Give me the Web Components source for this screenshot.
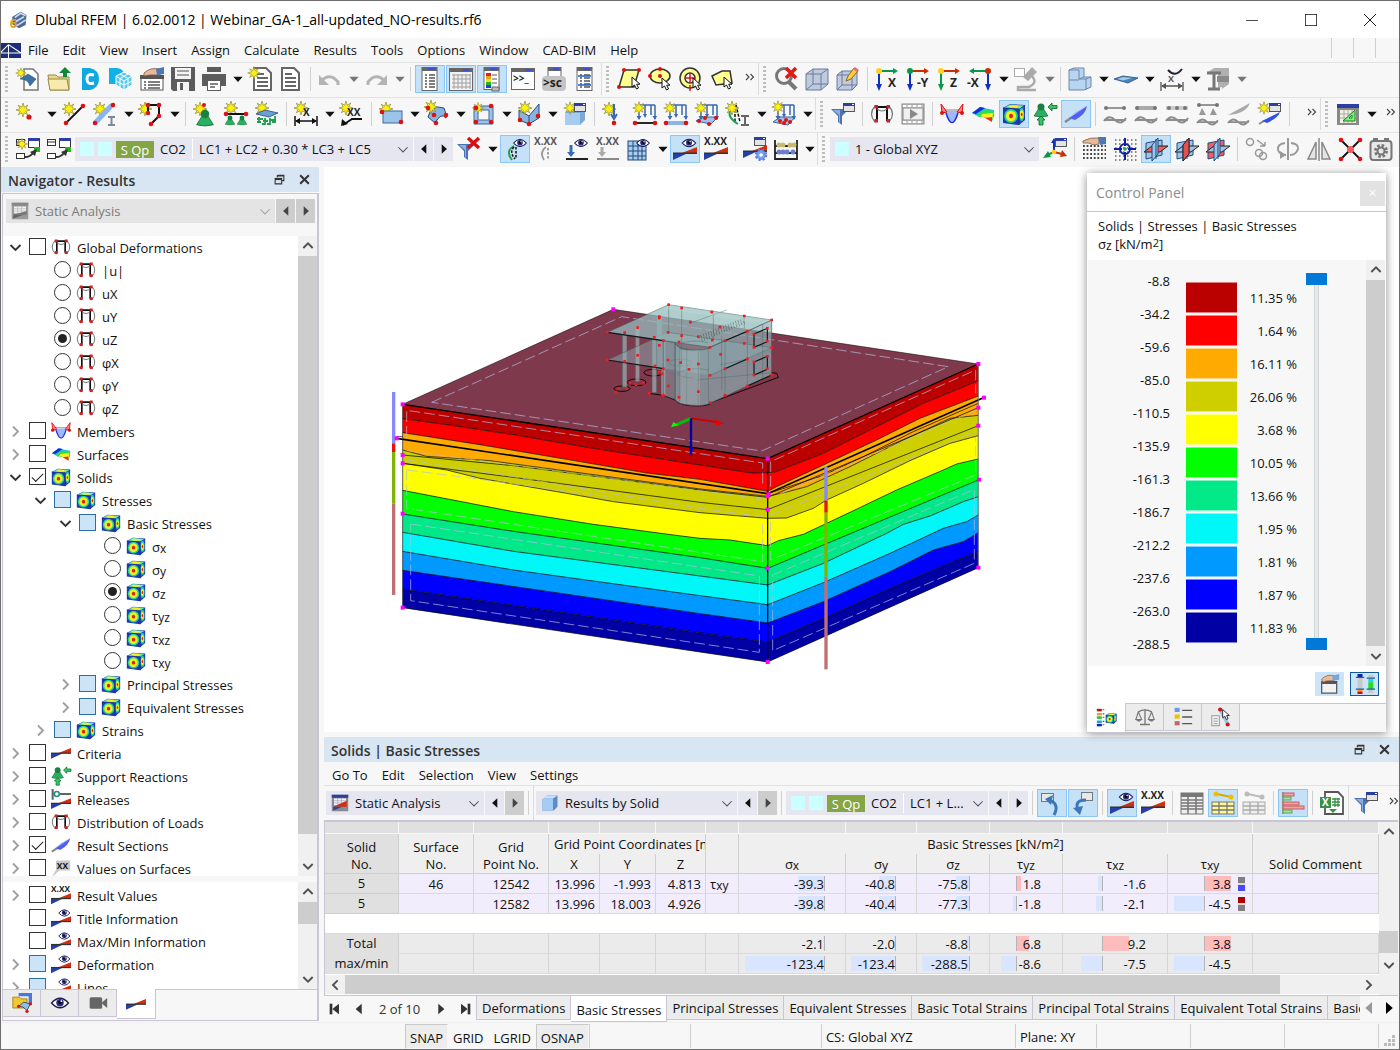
<!DOCTYPE html>
<html lang="en">
<head>
<meta charset="utf-8">
<title>Dlubal RFEM</title>
<style>
html,body{height:100%;margin:0}
body{font:13px/18px "Open Sans","Noto Sans",sans-serif;color:#111;overflow:hidden}
</style>
</head>
<body>
<app-window></app-window>
<script>
/* ---------- helpers ---------- */
const define = (name, css, render, after) => customElements.define(name, class extends HTMLElement {
  connectedCallback() {
    if (this.shadowRoot) return;
    const root = this.attachShadow({ mode: 'open' });
    root.innerHTML = `<style>*{box-sizing:border-box}button,select,input{font:inherit;color:inherit;margin:0}button{border:0;background:none;padding:0}${css}</style>` + render(this);
    if (after) after(this, root);
  }
});

/* ---------- icon drawing ---------- */
const P = (d, f = 'none', s = '', w = 1) => `<path d="${d}" fill="${f}"${s ? ` stroke="${s}" stroke-width="${w}"` : ''}/>`;
const R = (x, y, w, h, f, s = '') => `<rect x="${x}" y="${y}" width="${w}" height="${h}" fill="${f}"${s ? ` stroke="${s}"` : ''}/>`;
const C = (x, y, r = 2, f = '#e01010') => `<circle cx="${x}" cy="${y}" r="${r}" fill="${f}"/>`;
const G = (x, y, s, inner) => `<g transform="translate(${x} ${y}) scale(${s})">${inner}</g>`;
const T = (x, y, t, s = 9, c = '#222') => `<text x="${x}" y="${y}" font-size="${s}" font-weight="700" fill="${c}" font-family="Open Sans,sans-serif">${t}</text>`;
const star = (x = 6, y = 6, s = 1) => G(x, y, s, P('M0-7L1.3-2.8 4.8-5 2.8-1.5 7 0 2.8 1.3 4.8 4.8 1.3 2.8 0 7-1.3 2.8-4.8 4.8-2.8 1.3-7 0-2.8-1.3-4.8-4.8-1.3-2.8Z', '#ffee10', '#8a8a3a', .7));
const eye = (x = 16, y = 5, s = 1) => G(x, y, s, P('M-7.500 0Q0-8.500 7.500 0Q0 8.500-7.500 0Z', '#fff', '#1b1b55', 1.2) + C(0, -.3, 3.3, '#2b2b7a') + C(0, -.6, 1.4, '#000') + C(1.200, -1.600, .8, '#fff'));
const win = (x, y, w = 12, h = 9) => R(x + .5, y + .5, w - 1, h - 1, '#e4e4e4', '#555') + R(x, y, w, 3, '#2d3f9e') + R(x + w - 3, y + 1, 2, 1, '#fff');
const wedge = (y = 15) => P(`M0 ${y}H15L0 ${y + 7}Z`, '#2440a8') + P(`M9 ${y}L24 ${y - 6}V${y}Z`, '#d03010') + R(0, y - .5, 24, 1.500, '#333');
const frame = () => P('M6 5H18M7 5V19M17 5V19', 'none', '#111', 2) + P('M5 4Q-2 12 5 20M19 4Q26 12 19 20M7 7Q12 11 17 7', 'none', '#777', 1.200) + [[5, 4], [17, 4], [5, 18], [17, 18]].map(([x, y]) => R(x - .5, y - 1, 3.500, 3.500, '#d02020')).join('');
const cubeSolid = P('M1 6L8 2L23 3V18L17 23L1 21Z', '#2038b8') + P('M2 6L8 2.500L22 3.500L17 7Z', '#70e8b8') + P('M17 7L22 4V17.500L17 22Z', '#2850c8') + '<ellipse cx="9" cy="14" rx="6.800" ry="7" fill="#20d890"/><ellipse cx="9" cy="14" rx="5" ry="5.200" fill="#f4f020"/><ellipse cx="9" cy="14" rx="2" ry="2.200" fill="#e02010"/><ellipse cx="19.700" cy="12.500" rx="2.500" ry="6.500" fill="#20d890"/><ellipse cx="19.700" cy="12.500" rx="1.800" ry="4.200" fill="#f4f020"/><ellipse cx="19.700" cy="12.500" rx=".9" ry="1.800" fill="#e02010"/><ellipse cx="12" cy="4.600" rx="5" ry="1.200" fill="#f4f020"/>' + P('M1 6L17 7V23', 'none', '#1a2a90', 1);
const cursor = (x, y) => G(x, y, 1, P('M0 0L0 10L2.500 8L4.500 12L6.500 11L4.700 7.200H8Z', '#fff', '#111', 1));
const doc = (x = 5, c = '#666') => P(`M${x} 1H${x + 12}L${x + 17} 6V23H${x}Z`, '#fff', c, 2) + P(`M${x + 3} 7H${x + 10}M${x + 3} 11H${x + 14}M${x + 3} 15H${x + 14}M${x + 3} 19H${x + 14}`, 'none', c, 1.800);
const listwin = b => R(4, .5, 15, 23, '#fff', '#666') + R(4, 0, 15, 4, '#666') + R(10, 1, 7, 2, '#3a50e0') + P('M7 8H9M7 11H9M7 14H9M7 17H9M7 20H9M11 8H17M11 11H17M11 14H17M11 17H17M11 20H17', 'none', b || '#555', 1.300);
const funnel = P('M0 7H18L11 14V23L7 20V14Z', '#4a72b4') + P('M2 8H9L9 21L8 20V13Z', '#8fb0de');
const axes = (t, c1, c2, o, mir) => { const x = mir ? 20 : 4, e = mir ? 1 : 23, d = mir ? 1 : -1; return P(`M${x} 4H${e + d * 3}`, 'none', c1, 2) + P(`M${e} 4L${e + d * 5} 1V7Z`, c1) + P(`M${x} 4V18`, 'none', c2, 2) + P(`M${x} 24L${x - 3} 17H${x + 3}Z`, c2) + C(x, 4, 3, o) + T(mir ? -1 : t === '-Y' ? 11 : 13, 20, t, 12); };
const boxes = R(.5, 2.500, 8, 6, '#fff', '#333') + P('M0 5H9', 'none', '#333', 1) + R(12.500, 1.500, 11, 9, '#fff', '#333') + R(12, 1, 12, 3, '#2d3f9e') + R(18, 10, 6, 5, '#20b820') + R(.5, 16.500, 8, 5, '#fff', '#333') + P('M9 20Q14 20 17 16', 'none', '#333', 2) + P('M14 15L21 12L19 19Z', '#333');
const loadArrows = P('M6 3V17M12 3V13M18 3V13M22 3V17M6 3H22', 'none', '#3a6ab0', 1.500) + P('M3.500 14H8.500L6 18ZM10 12H14L12 16ZM19.500 14H24L22 18Z', '#3a6ab0');
const sine = P('M1 19Q6 12 12 18T23 16M1 18H23', 'none', '#8c8c8c', 2);
const green = '#1fa050';
const man = (x, y, s = 1) => G(x, y, s, P('M-7 9L-2 1H2L7 9Q0 11-7 9Z', '#28b060', '#0a6030', .6) + C(0, 0, 3.500, '#188040'));
const plane = (a, b) => P('M2 6L18 3V18L2 22Z', a, '#234a80', 1) + P('M0 15L8 9H24L16 15Z', b, '#222', 1) + P('M8 24V8L14 1V17Z', '#9cc4e8', '#234a80', 1) + P('M12 2V22', 'none', '#234a80', 1);
const ICONS = {
  app: P('M4 8L14 2L21 6L20 18L12 22L4 17Z', '#4a6a98') + P('M7 9L14 4L20 7M8 14L18 8M9 19L20 12', 'none', '#c8d8ee', 2) + T(1, 22, '6', 15, '#e0a020'),
  bridge: R(0, 0, 24, 18, '#1c2e78') + P('M0 12H24M9 2V18M9 2L0 11M9 2L24 12', 'none', '#fff', 1.300),
  new: P('M8 2H17L22 7V23H8Z', '#fff', '#777', 1.500) + P('M4 12L12 7L20 12L14 19Q12 12 4 12Z', '#3a70a8', '#245', .5) + star(5, 6, .75),
  open: P('M1 8H9L11 10H22V23H3Z', '#e8d888', '#9a8a48', 1) + P('M1 12H20L22 23H3Z', '#f6eab0', '#9a8a48', 1) + P('M18 0L24 6H20V10H16V6H12Z', '#108838'),
  dcloud: P('M4 1H12Q21 3 21 12T12 23H4Z', '#10a8e0') + P('M16 8Q9 6 9 12T16 16', 'none', '#fff', 3),
  blocks: P('M0 1H8Q15 2 15 8V17H0Z', '#10b0e8') + P('M15 5L23 9V18L15 23L7 18V9Z', '#58c8f0', '#fff', 1) + P('M7 9L15 14L23 9M15 14V23M11 7L19 11.500V20M19 7L11 11.500V20M7 14L15 18L23 14', 'none', '#fff', 1),
  handlist: R(1, 9, 22, 14, '#fff', '#555') + R(0, 8, 24, 4, '#555') + P('M4 15H6M8 15H20M4 18H6M8 18H20M4 21H6M8 21H20', 'none', '#555', 1.300) + P('M4 6Q10 0 20 2V8H10L4 9Z', '#e8b898', '#7a5a48', .8) + P('M16 2L24 0V7L17 8Z', '#4a78b8'),
  handbox: P('M2 9H20V23H2Z', '#f2f2f2', '#555', 1.500) + R(2, 9, 18, 3, '#555') + P('M2 6Q8 0 17 2V8H9L3 10Z', '#e8b898', '#7a5a48', .8) + P('M15 2L23 0V7L15 8Z', '#7aa4d8'),
  save: P('M0 0H24V24H2L0 22Z', '#5c5c5c') + R(4, 1, 16, 11, '#f4f4f4') + P('M6 4H18M6 8H18', 'none', '#888', 1.500) + R(6, 15, 12, 9, '#f4f4f4') + R(9, 16, 3, 7, '#5c5c5c'),
  print: R(5, 0, 14, 5, '#5c5c5c') + R(0, 7, 24, 12, '#5c5c5c') + R(5.500, 13.500, 13, 10, '#fff', '#5c5c5c') + P('M8 17H16M8 20H13', 'none', '#5c5c5c', 1.500),
  newdoc: doc(6) + star(6, 6, .9), doc: doc(3),
  undo: P('M3 14Q12 5 20 15V18', 'none', '#b4b4b4', 3) + P('M1 8V18H11Z', '#b4b4b4'),
  redo: P('M21 14Q12 5 4 15V18', 'none', '#b4b4b4', 3) + P('M23 8V18H13Z', '#b4b4b4'),
  panel1: listwin(), panel3: listwin('#555') + P('M5 9H18M5 18H18', 'none', '#2060d0', 1.500),
  table1: R(.5, 1.500, 23, 22, '#f2f2f2', '#666') + R(0, 1, 24, 4, '#666') + R(14, 2, 7, 2, '#3a50e0') + P('M3 8H22M3 12H22M3 16H22M3 20H22M5 7V22M9 7V22M13 7V22M17 7V22M21 7V22', 'none', '#a0a0a0', 1),
  panel2: R(4, .5, 15, 22, '#fff', '#666') + R(4, 0, 15, 4, '#666') + R(10, 1, 7, 2, '#3a50e0') + R(6, 6, 5, 3, '#e02020') + R(6, 9, 5, 3, '#f0a020') + R(6, 12, 5, 3, '#e8e820') + R(6, 15, 5, 3, '#20b820') + R(6, 18, 5, 3, '#2040e0') + P('M12 8H17M12 12H17M12 16H17', 'none', '#555', 1) + R(12, 20, 7, 4, '#bbb', '#666'),
  console: R(.5, 1.500, 23, 21, '#fff', '#666') + R(0, 1, 24, 4, '#666') + R(14, 2, 7, 2, '#3a50e0') + T(2, 15, '&gt;&gt;_', 10),
  sc: R(6, .5, 13, 12, '#fff', '#666') + R(6, 0, 13, 4, '#666') + R(11, 1, 6, 2, '#3a50e0') + '<rect x="0" y="9" width="24" height="15" rx="4" fill="#c4c4c4"/>' + T(1, 20, '&gt;sc', 12),
  selquad: P('M7 3L22 3L17 20L2 20Z', '#ffff90', '#333', 1.500) + C(7, 3) + C(22, 3) + C(2, 20) + cursor(15, 10),
  selell: '<ellipse cx="12" cy="9" rx="10" ry="7" fill="#ffff90" stroke="#333" stroke-width="1.500"/>' + C(12, 2) + C(2, 9) + C(12, 9) + cursor(14, 11),
  selcirc: '<circle cx="11" cy="11" r="10" fill="#ffff90" stroke="#333" stroke-width="1.500"/><circle cx="11" cy="11" r="5" fill="#fff" stroke="#333" stroke-width="1.500"/>' + P('M11 6V16M6 11H16M11 18V24', 'none', '#e01010', 1.500) + cursor(14, 11),
  selpoly: P('M2 9L12 4L20 4L22 16L6 18Z', '#ffff90', '#333', 1.500) + cursor(14, 10),
  findx: '<circle cx="10" cy="9" r="7.500" fill="none" stroke="#777" stroke-width="3"/>' + P('M15 15L22 22', 'none', '#777', 4) + P('M12 1L22 11M22 1L12 11', 'none', '#e01818', 3.500),
  cube: P('M1 7L8 2H23V17L16 23H1Z', '#c0cade', '#6a7a9a', 1) + P('M1 7H16V23M16 7L23 2M8 2V17H23M8 17L1 23', 'none', '#6a7a9a', 1),
  cubepen: P('M1 8L6 4H21V18L16 23H1Z', '#c0cade', '#6a7a9a', 1) + P('M1 8H16V23M16 8L21 4M6 4V18H21M6 18L1 23', 'none', '#6a7a9a', 1) + P('M10 14L12 9L18 1L22 4L15 12Z', '#ffd040', '#a06010', 1) + P('M17 2L21 5L23 3L19 0Z', '#e07070'),
  ax1: axes('X', '#0a9848', '#1030c0', '#ffd020'), ax2: axes('-Y', '#c83000', '#1030c0', '#0a9848'), ax3: axes('Z', '#c83000', '#0a9848', '#ffd020'), ax4: axes('-X', '#0a9848', '#1030c0', '#c83000', 1),
  micro: R(.5, 1.500, 10, 8, '#fff', '#aaa') + P('M18 0L23 5L14 14L9 10Z', '#aaa') + P('M18 9Q24 16 15 20H4V23H22', 'none', '#aaa', 2.500),
  stair: P('M1 3L6 1H16V10H23V20L16 23H1Z', '#b8d4f0', '#6a88a8', 1) + P('M1 3H11V12L16 10M11 12H18V23M18 12L23 10M1 13H11', 'none', '#6a88a8', 1),
  slab: P('M0 12L9 9L24 11L14 16Z', '#4a86bc', '#234a78', .8) + P('M3 12L9 10L18 11L9 13.500Z', '#a4c8e8'),
  dimx: P('M1 15V24M23 15V24M2 19H22', 'none', '#555', 1.300) + P('M1 19L6 16V22ZM23 19L18 16V22Z', '#555') + P('M8 3Q15 11 22 2', 'none', '#223', 2) + T(8, 15, 'X', 9, '#555'),
  beam3d: P('M2 5L8 1H23V17L16 22V20L12 21V6H2Z', '#b0b0b0') + P('M1 6H15M8 6V22M2 22H14', 'none', '#777', 3) + P('M11 9H23V15H11Z', '#8a8a8a'),
  snode: star(7, 8) + C(13, 15, 2.600),
  sline: star(7, 7) + P('M4 21L20 5', 'none', '#111', 1.800) + C(4, 21, 2.300) + C(21, 4, 2.300),
  smember: star(7, 7) + P('M2 21L19 3', 'none', '#8cb4e8', 5) + C(2, 21, 2.300) + C(20, 3, 2.300) + P('M15 15H22M18.500 15V23M15 23H22', 'none', '#7a88a0', 2),
  spoly: star(6, 7) + P('M9 11V3H20V14L12 22', 'none', '#111', 2) + C(9, 11, 2.300) + C(9, 3, 2.300) + C(20, 3, 2.300) + C(20, 14, 2.300) + C(12, 22, 2.300),
  ssup: star(7, 7) + C(11, 3, 2) + man(12, 12, 1.200),
  slinesup: star(7, 6) + P('M2 12H22', 'none', '#111', 2) + C(2, 12, 2.300) + C(22, 12, 2.300) + man(6, 16, .7) + man(18, 16, .7),
  ssurfsup: star(7, 6) + P('M1 12L10 8L23 11L14 15Z', '#6aa0d0', '#234a78', .8) + P('M4 15V20H2M4 20H6M10 16V22H7M15 16V22H12M20 14V20H17M2 17H8M8 19H13M14 18H21', 'none', green, 1.800),
  sdim: star(7, 6) + P('M1 14V24M23 14V24M2 19H22', 'none', '#111', 1.500) + P('M1 19L6 16V22ZM23 19L18 16V22Z', '#111') + T(9, 14, 'X', 10),
  sxx: star(6, 6) + T(7, 14, 'XX', 10) + P('M22 17H12L3 23', 'none', '#111', 1.800) + P('M1 24L2 17L8 22Z', '#111'),
  ssurf: star(7, 7) + R(4, 9, 19, 12, '#9cc4ea', '#3a6aa0') + C(3, 10, 2.300) + C(22, 20, 2.300),
  ssurf2: P('M3 15Q6 2 19 6Q22 14 21 16Q16 10 10 21Z', '#88b4e0', '#2a4a80', 1) + star(6, 5) + C(3, 6, 2.300) + C(11, 21, 2.300) + C(21, 13, 2.300) + C(9, 13, 2.300),
  sopen: '<path d="M3 4H22V22H3ZM7 8V18H18V8Z" fill="#9cc4ea" stroke="#3a6aa0" fill-rule="evenodd"/>' + star(7, 6, .8) + C(5, 6, 2.300) + C(20, 4, 2.300) + C(5, 20, 2.300) + C(20, 20, 2.300),
  ssolid: P('M2 8L12 14V22L2 18ZM12 14L22 2V16L12 22', '#88b4e0', '#2a4a80', 1) + star(8, 6) + C(3, 18, 2.300) + C(12, 22, 2.300) + C(21, 14, 2.300),
  sblock: P('M2 11L7 7H22V18L17 23H2Z', '#7aa8d8') + R(2, 11, 15, 12, '#a8ccf0') + star(7, 6, .9) + win(11, 1),
  sload1: star(7, 7) + P('M12 2V17M9 12L12 17L15 12', 'none', '#3a6ab0', 2) + C(12, 21, 2.300),
  sload2: loadArrows + star(6, 6, .9) + P('M2 21H22', 'none', '#111', 1.800) + C(2, 21, 2.300) + C(22, 21, 2.300),
  sload3: loadArrows + star(6, 6, .9) + P('M2 21H22', 'none', '#8cb4e8', 4) + C(2, 21, 2.300) + C(22, 21, 2.300),
  sload4: P('M1 19L8 15H23L16 22Z', '#9cc4ea', '#3a6aa0') + loadArrows + star(6, 6, .9) + C(4, 19) + C(10, 16) + C(14, 22) + C(21, 16),
  simp: '<path d="M9 3V20M10 3L14 20" fill="none" stroke="#111" stroke-width="1.500" stroke-dasharray="3 1.500"/>' + P('M5 6Q0 15 12 22', 'none', green, 2) + star(6, 6) + P('M15 14H23M19 14V23M15 23H23', 'none', '#666', 2),
  sload5: P('M1 20L8 15H23L16 23Z', '#9cc4ea', '#3a6aa0') + loadArrows + star(6, 5, .9) + C(8, 19) + C(12, 21) + C(14, 18) + C(18, 20),
  filter: funnel + win(12, 1), filterx: funnel + P('M11 1L22 11M22 1L11 11', 'none', '#d81010', 3.500),
  frame: frame(), film: R(1, 2, 22, 20, '#c8c8c8', '#888') + R(2, 6, 20, 12, '#f0f0f0', '#888') + '<path d="M2 4H22M2 20H22" stroke="#fff" stroke-width="2" stroke-dasharray="3 2"/>' + P('M9 7L17 12L9 17Z', '#888'),
  mem: P('M2 8H22', 'none', '#888', 1) + P('M2 2L5 9H19L22 2L20 11H18Q12 28 6 11H3Z', '#a0b8f8') + P('M6 11Q12 30 18 11', 'none', '#2030e0', 1.600) + P('M1 2L2 11L7 10ZM23 2L22 11L17 10Z', '#ff8080', '#e01010', 1) + C(2, 11, 2) + C(22, 11, 2),
  surf: P('M1 11L10 5Q16 7 23 8V14L21 19Q12 14 8 15Z', '#20c0e8') + P('M6 12L14 8L23 9L21 19Q13 14 8 15Z', '#30e040') + P('M11 12L22 11L21 19Q16 15 10 14.500Z', '#f8f020') + P('M14 16L21 15V20Z', '#f03010') + P('M1 11L9 5L14 6L5 12Z', '#1030d0'),
  solid: cubeSolid,
  support: man(8, 5, 1) + P('M15 5L19 1V3.500H24V6.500H19V9ZM8 14L12 18H10V23H6V18H4Z', '#30c860', '#0a6030', .8),
  section: P('M1 20L7 16', 'none', '#888', 2.500) + P('M5 16L23 4Q22 12 11 18Z', '#5060f0') + P('M5 16L23 4L12 10Z', '#a0a8ff'),
  r1: sine + P('M2 6H22', 'none', '#777', 1.500) + C(3, 6, 2, '#777') + C(21, 6, 2, '#777'),
  r2: sine + P('M2 6H22', 'none', '#aaa', 4) + C(3, 6, 2, '#777') + C(21, 6, 2, '#777'),
  r3: sine + R(1, 4, 22, 4, '#ccc') + C(4, 6, 2, '#777') + C(12, 6, 2, '#777') + C(20, 6, 2, '#777'),
  r4: G(0, 3, .95, sine) + P('M2 3H22', 'none', '#777', 1.500) + C(3, 3, 2, '#777') + C(21, 3, 2, '#777') + P('M3 13L6 6L10 13ZM14 13L17 6L21 13Z', '#999'),
  r5: G(0, 3, .95, sine) + P('M1 13L23 1Q20 9 9 12Z', '#aaa'),
  snewsec: win(11, 1) + star(6, 6, .9) + P('M1 22L6 19', 'none', '#888', 2) + P('M4 19L22 10Q20 16 9 21Z', '#3050e8'),
  gridtri: R(1, 2, 22, 21, '#888') + R(1, 2, 22, 4, '#2d3f9e') + R(4, 8, 16, 13, '#f0f0e0') + P('M4 12H20M4 16H20M8 8V21M12 8V21M16 8V21', 'none', '#aaa', 1) + P('M7 19L19 8V19Z', '#80f080', '#208020', 1) + P('M13 16L16 13V16Z', '#fff', '#208020', 1),
  tbl1: boxes + star(6, 7, .8), tbl2: boxes,
  eyeimp: P('M11 9Q2 14 9 23', 'none', green, 2) + '<path d="M11 10Q6 15 12 22M13 10V22" fill="none" stroke="#111" stroke-width="1.500" stroke-dasharray="2.500 1.500"/>' + eye(17, 6, .85),
  ximp: T(0, 8, 'X.XX', 10, '#555') + P('M12 10Q5 15 10 23', 'none', '#999', 1.800) + '<path d="M14 11V23" stroke="#888" stroke-width="1.500" stroke-dasharray="2.500 1.500"/>',
  eyeload: P('M6 8V18', 'none', '#3a6ab0', 3) + P('M2 15H10L6 20Z', '#3a6ab0') + R(1, 21, 22, 2, '#222') + eye(16, 6, .85),
  xload: T(0, 8, 'X.XX', 10, '#555') + P('M6 10V17', 'none', '#aaa', 3) + P('M2 15H10L6 20Z', '#aaa') + R(1, 21, 22, 2, '#888'),
  eyegrid: R(1, 4, 18, 19, '#a8ccf0', '#234a78') + P('M1 9H19M1 14H19M1 19H19M6 4V23M11 4V23M15 4V23', 'none', '#234a78', 1) + eye(16, 6, .85),
  eyeres: wedge(16) + eye(16, 6, .9), xres: wedge(16) + T(0, 8, 'X.XX', 10),
  resgear: wedge(14) + win(11, 0) + C(18, 18, 5, '#7aa0f0') + '<circle cx="18" cy="18" r="5" fill="none" stroke="#5a80d8" stroke-width="2.500" stroke-dasharray="2 2"/>' + C(18, 18, 1.800, '#fff'),
  abacus: P('M1 3V23M23 3V23M1 9H23M1 16H23M1 22H23', 'none', '#222', 1.800) + [5, 9, 16, 20].map(x => C(x, 8, 2.500, '#c8b870')).join('') + [5, 9, 13, 19].map(x => C(x, 15, 2.500, '#6a80c8')).join(''),
  csys: P('M11 15V4', 'none', '#1030c0', 2) + P('M11 15L4 18', 'none', '#0a9848', 2) + P('M11 15L19 17', 'none', '#c83000', 2) + P('M0 21L5 14L8 20Z', '#0a9848') + P('M24 19L17 20L19 13Z', '#c83000') + P('M8 6L11 1L14 6Z', '#1030c0') + C(11, 15, 2.300, '#ffd020') + win(12, 1),
  handgrid: '<path d="M1 9H24M1 13H24M1 17H24M1 21H24" fill="none" stroke="#444" stroke-width="1.800" stroke-dasharray="1.800 1.800"/>' + P('M1 4Q8 0 17 1V7L12 8Q6 5 1 6Z', '#e8b898', '#7a5a48', .8) + P('M16 0L24 0V7L18 8Z', '#4a78b8'),
  snapgrid: '<path d="M2 3H24M2 7H24M2 11H24M2 15H24M2 19H24M2 23H24" fill="none" stroke="#666" stroke-width="1.500" stroke-dasharray="1.500 2.500"/><circle cx="12" cy="12" r="5" fill="none" stroke="#1020a0" stroke-width="2"/>' + P('M12 1V9M12 15V23M1 12H9M15 12H23', 'none', '#1020a0', 2) + C(12, 12, 1.800, '#20a060'),
  pl1: plane('#9cc4e8', '#f06060'), pl2: plane('#9cc4e8', '#9cc4e8') + P('M8 24V8L14 1V17Z', '#e85050', '#222', 1), pl3: plane('#f06060', '#9cc4e8'),
  g1: '<circle cx="5" cy="5" r="3.500" fill="none" stroke="#999" stroke-width="1.500"/><circle cx="14" cy="16" r="3.500" fill="none" stroke="#999" stroke-width="1.500"/><circle cx="18" cy="19" r="3.500" fill="none" stroke="#999" stroke-width="1.500"/>' + P('M12 3L20 9M20 9V5M20 9H15', 'none', '#999', 1.500),
  g2: P('M9 6Q1 7 2 13Q4 18 10 18M15 6Q23 7 22 12Q20 18 14 18M12 1V23', 'none', '#999', 2) + P('M4 22V14L10 18Z', '#999'),
  g3: P('M1 22L9 5V22ZM23 22L15 5V22Z', '#e4e4e4', '#888', 1.500) + P('M12 1V24', 'none', '#888', 1.500),
  g4: P('M3 3L22 22M22 3L3 22', 'none', '#111', 1.800) + C(3, 3, 2.300) + C(22, 3, 2.300) + C(3, 22, 2.300) + C(22, 22, 2.300) + C(12.500, 12.500, 3.500, '#f06060'),
  g5: '<rect x="1.500" y="4" width="21" height="19" rx="3" fill="#e8e8e8" stroke="#777" stroke-width="2"/>' + R(4, 1, 5, 4, '#777') + R(15, 1, 5, 4, '#777') + '<circle cx="12" cy="14" r="5.500" fill="none" stroke="#777" stroke-width="3" stroke-dasharray="2.500 1.800"/><circle cx="12" cy="14" r="3.500" fill="none" stroke="#777" stroke-width="2"/>',
  result: wedge(12), release: P('M2 0V13M2 6H24', 'none', '#5a6a6a', 2.500) + '<circle cx="7" cy="6" r="3" fill="#fff" stroke="#2a9080" stroke-width="2"/>' + wedge(17),
  xxflag: P('M6 3H23V15H10L1 23L6 14Z', '#c8c8c8') + T(7, 13, 'XX', 10, '#111'),
  static: R(1, 1, 22, 22, '#8a8a94') + R(1, 1, 22, 4, '#2d3f9e') + R(4, 6, 16, 9, '#f4f4f8') + P('M4 9H20M4 12H20M9 6V15M14 6V15', 'none', '#a8a8b8', 1) + P('M3 17L21 9V17Z', '#d03010') + P('M3 17H15L3 22Z', '#3040a8'),
  staticg: R(1, 1, 22, 22, '#9a9a9a') + R(1, 1, 22, 4, '#888') + R(4, 6, 16, 9, '#f0f0f0') + P('M4 9H20M4 12H20M9 6V15M14 6V15', 'none', '#bbb', 1) + P('M3 17L21 12V17Z', '#777') + P('M3 17H17L3 22Z', '#666'),
  bluecube: P('M2 7L8 2H22V17L17 22H2Z', '#5a8cc8') + R(2, 6, 14, 16, '#a4ccf4') + P('M2 6L8 2H22L16 6Z', '#c8e2fa'),
  tabproj: P('M1 5H9L11 7H18V18H1Z', '#f0c830', '#a07810', 1) + P('M8 0H24V14H20V4H8Z', '#4878d8') + P('M8 16L14 11L22 13L18 21Q13 15 8 16Z', '#90c0e8', '#246', 1) + C(8, 16) + C(22, 13) + C(18, 22),
  tabeye: eye(12, 12, 1.350), tabcam: '<rect x="2" y="5" width="15" height="14" rx="2" fill="#666"/>' + P('M17 11L23 6V18L17 13Z', '#666'),
  arr1: R(1.500, 2.500, 12, 8, '#e8e8e8', '#777') + P('M14 24Q20 13 9 9', 'none', '#3a78b8', 3) + P('M5 8L13 4L11 14Z', '#3a78b8'),
  arr2: R(10.500, 1.500, 11, 8, '#e8e8e8', '#777') + P('M15 9Q3 9 7 19', 'none', '#3a78b8', 3) + P('M2 17L12 15L9 24Z', '#3a78b8'),
  tgrid: R(1, 2, 22, 21, '#eee', '#777') + R(1, 2, 22, 4, '#777') + P('M1 9H23M1 12H23M1 15H23M1 18H23M8 4V23M16 4V23', 'none', '#777', 1.500),
  tyel: R(1, 11, 22, 12, '#fff890', '#777') + P('M1 15H23M1 19H23M8 11V23M16 11V23', 'none', '#777', 1.300) + P('M6 3L20 6', 'none', '#d8a800', 2) + C(5, 3, 2.500, '#f0c000') + C(20, 6, 2.500, '#f0c000'),
  tgry: R(1, 11, 22, 12, '#eee', '#aaa') + P('M1 15H23M1 19H23M8 11V23M16 11V23', 'none', '#aaa', 1.300) + P('M6 3L20 6', 'none', '#bbb', 2) + C(5, 3, 2.500, '#bbb') + C(20, 6, 2.500, '#bbb'),
  bars: P('M2 1V23', 'none', '#888', 1.500) + R(2, 2, 11, 3, '#f4a0a0', '#c06060') + R(2, 6, 8, 3, '#a0e0a0', '#60a060') + R(2, 11, 16, 3, '#f4a0a0', '#c06060') + R(2, 15, 21, 3, '#f4a0a0', '#c06060') + R(2, 19, 9, 3, '#a0e0a0', '#60a060'),
  excel: P('M5 1H18L23 6V23H5Z', '#fff', '#555', 1.800) + R(0, 6, 11, 11, '#3a9048') + T(2, 15, 'X', 10, '#fff') + P('M12 8H20M12 11H20M12 14H20M15 7V16M18 7V16', 'none', '#3a9048', 1.300) + P('M9 18H17L13 22Z', '#3a9048'),
  cplist: R(1, 1, 6, 3, '#c01010') + R(1, 6, 6, 3, '#f0a020') + R(1, 10, 6, 3, '#20c820') + R(1, 15, 6, 3, '#20a0e0') + R(1, 19, 6, 3, '#1020c0') + P('M8 2H10M8 7H10M8 11H10M8 16H10M8 20H10', 'none', '#555', 1.300) + G(11, 5, .6, cubeSolid),
  scales: P('M12 3V21M6 21H18M4 6Q12 1 20 6', 'none', '#777', 1.600) + P('M4 6L1 15H8ZM20 6L16 15H23Z', 'none', '#777', 1.300) + P('M1 15H8Q5 19 1 15M16 15H23Q20 19 16 15', '#777', '#777', 1),
  legend: R(2, 1, 6, 5, '#6a98f0') + R(2, 9, 6, 5, '#f0c000') + R(2, 17, 6, 5, '#c06868') + P('M11 4H23M11 12H23M11 20H23', 'none', '#555', 1.600),
  pick: R(1, 10.500, 9, 12, '#f4f4f4', '#888') + P('M3 14H8M3 17H8M3 20H8', 'none', '#888', 1) + P('M10 2L20 20', 'none', '#9cc4ea', 4) + C(11, 3, 2.500) + C(20, 21, 2.500) + cursor(14, 3),
  ranges: R(3, 4, 6, 16, '#c8c8c8') + R(3, 0, 6, 4, '#1020a0') + R(3, 18, 6, 3, '#f0a020') + R(3, 21, 6, 3, '#c01010') + R(16, 1, 6, 22, '#c8c8c8') + R(16, 6, 6, 4, '#10e0e0') + R(16, 10, 6, 8, '#20e020') + P('M1 4H11M1 18H11M14 5H24M14 18H24', 'none', '#1060b0', 1.500),
  chev: P('M4 9L12 17L20 9', 'none', '#555', 1.800), up: P('M5 15L12 8L19 15', 'none', '#505050', 2.800), down: P('M5 9L12 16L19 9', 'none', '#505050', 2.800), left: P('M16 5L9 12L16 19', 'none', '#505050', 2.800), right: P('M8 5L15 12L8 19', 'none', '#505050', 2.800),
  exopen: P('M4 8L12 16L20 8', 'none', '#333', 3), exclosed: P('M8 4L16 12L8 20', 'none', '#a0a0a0', 3),
  tl: P('M16 4V20L7 12Z', 'currentColor'), tr: P('M8 4V20L17 12Z', 'currentColor'), td: P('M4 8H20L12 17Z', 'currentColor'),
  first: P('M18 4V20L8 12Z', 'currentColor') + R(4, 4, 4, 16, 'currentColor'), last: P('M6 4V20L16 12Z', 'currentColor') + R(16, 4, 4, 16, 'currentColor'),
  more: P('M4 6L10 12L4 18M13 6L19 12L13 18', 'none', '#444', 2.200),
  restore: P('M8 4H20V14H16M8 4V8M4 10H16V20H4ZM8 5.500H20', 'none', '#333', 2) + R(4, 9, 12, 4, '#333'),
  close: P('M4 4L20 20M20 4L4 20', 'none', '#333', 3.800),
  wmin: R(4, 12, 16, 1, '#111'), wmax: R(4.500, 4.500, 15, 15, 'none', '#111'), wclose: P('M4 4L20 20M20 4L4 20', 'none', '#111', 1.300)
};
define('ui-icon', `:host{display:block;width:24px;height:24px;flex:none}svg{display:block;width:100%;height:100%;overflow:visible}`,
  el => `<svg viewBox="0 0 ${el.getAttribute('name') === 'bridge' ? '24 18' : '24 24'}" aria-hidden="true">${ICONS[el.getAttribute('name')] || ''}</svg>`);

/* ---------- toolbar parts ---------- */
define('tool-button', `:host{display:flex;flex:none}
button{height:28px}
.main{width:30px;margin-right:1px;display:grid;place-items:center;border:1px solid transparent}
:host([active]) .main{background:#c5e1f7;border-color:#8cc6f4}
.menu{width:15px;display:grid;place-items:center}.menu ui-icon{width:14px;height:14px}
:host([dim]) .menu{color:#777}`,
  el => `<button class="main" aria-label="${el.getAttribute('icon')}"><ui-icon name="${el.getAttribute('icon')}"></ui-icon></button>${el.hasAttribute('menu') ? '<button class="menu" aria-label="menu"><ui-icon name="td"></ui-icon></button>' : ''}`);
define('tool-separator', `:host{display:block;flex:none;width:1px;height:24px;background:#d0d0d0;margin:0 4px 0 3px}`, () => '');
define('tool-more', `:host{display:block;flex:none;margin-left:auto}button{width:20px;height:28px;display:grid;place-items:center;padding:0 0 4px 3px}ui-icon{width:12px;height:12px}`, () => `<button aria-label="more"><ui-icon name="more"></ui-icon></button>`);
define('tool-group', `:host{display:flex;align-items:center;flex:none;height:100%;border-left:1px solid #dcdcdc}
:host([grow]){flex:1}:host([first]){border-left:0}:host([plain]){padding-left:2px}
:host(:not([plain]))::before{content:"";width:3px;height:26px;margin:0 5px 0 4px;background:repeating-linear-gradient(#bdbdbd 0 2px,transparent 2px 4px)}`, () => '<slot></slot>');
define('tool-row', `:host{display:flex;height:35px;flex:none;border-bottom:1px solid #e2e2e2;overflow:hidden;background:#f7f7f7;padding-bottom:2px}`, () => '<slot></slot>');
/* "name" button, "*name" pressed, "name>" with menu, "name~" with dimmed menu, "|" separator, "+" overflow */
const tools = s => s.trim().split(/\s+/).map(t => t === '|' ? '<tool-separator></tool-separator>' : t === '+' ? '<tool-more></tool-more>' :
  `<tool-button icon="${t.replace(/[*>~]/g, '')}"${t[0] === '*' ? ' active' : ''}${/[>~]$/.test(t) ? ' menu' : ''}${/~$/.test(t) ? ' dim' : ''}></tool-button>`).join('');

define('combo-box', `:host{display:flex;align-items:center;flex:none;height:24px;background:#e6e6f1;padding-left:5px;margin-right:1px}
:host([disabled]){background:#e4e4e4;color:#7a7a7a}
.pick{display:grid;flex:1;min-width:0;height:100%;align-items:center}
select{grid-area:1/1;appearance:none;border:0;background:none;width:100%;height:24px;padding:0 22px 0 6px;text-overflow:ellipsis;opacity:1}
.pick ui-icon{grid-area:1/1;justify-self:end;width:14px;height:14px;margin-right:3px;pointer-events:none}:host([disabled]) .pick ui-icon{opacity:.45}`,
  el => `<slot></slot><div class="pick"><select aria-label="${el.getAttribute('value')}"${el.hasAttribute('disabled') ? ' disabled' : ''}><option>${el.getAttribute('value')}</option></select><ui-icon name="chev"></ui-icon></div>`);
define('case-tag', `:host{display:flex;align-items:center;flex:none;height:100%}i{width:14px;height:14px;background:#ccffff;margin-right:4px}b{font-weight:400;background:#84a544;color:#fff;height:17px;line-height:19px;width:38px;text-align:center}span{padding:0 6px;width:38px;box-sizing:border-box}u{width:1px;height:20px;background:#fff}`,
  () => `<i></i><i></i><b>S Qp</b><span>CO2</span><u></u>`);
define('step-button', `:host{display:block;flex:none}button{width:19px;height:24px;background:#e6e6f1;display:grid;place-items:center;margin-right:1px}:host([off]) button{background:#cdcdcd;color:#444}ui-icon{width:14px;height:14px}`,
  el => `<button aria-label="${el.getAttribute('to')}"><ui-icon name="${el.getAttribute('to') === 'previous' ? 'tl' : 'tr'}"></ui-icon></button>`);

define('scroll-bar', `:host{display:flex;flex-direction:column;width:19px;background:#f0f0f0}:host([horizontal]){flex-direction:row;width:auto;height:19px}
button{flex:none;width:19px;height:20px;display:grid;place-items:center}:host([horizontal]) button{width:20px;height:19px}ui-icon{width:16px;height:16px}
.thumb{background:#cdcdcd}`,
  el => { const h = el.hasAttribute('horizontal'), [a, t, z] = el.getAttribute('parts').split(' '); return `<button aria-label="back"><ui-icon name="${h ? 'left' : 'up'}"></ui-icon></button><div style="flex:${a}"></div><div class="thumb" style="flex:${t}"></div><div style="flex:${z}"></div><button aria-label="forward"><ui-icon name="${h ? 'right' : 'down'}"></ui-icon></button>`; });

define('dock-header', `:host{display:flex;align-items:center;flex:none;height:25px;background:#d8e6f3;padding:0 8px 0 7px}
h2{margin:0 auto 0 0;font-size:14px;line-height:20px;font-weight:600;color:#333;padding-top:2px}button{width:26px;height:24px;display:grid;place-items:center}button:last-child{width:13px;margin-left:6px}ui-icon{width:13px;height:13px}`,
  () => `<h2><slot></slot></h2><button aria-label="restore"><ui-icon name="restore"></ui-icon></button><button aria-label="close"><ui-icon name="close"></ui-icon></button>`);
define('menu-strip', `:host{display:flex;align-items:center;gap:14px;flex:none;height:25px;border-bottom:1px solid #e2e2e2}button{white-space:nowrap;line-height:22px}slot{display:contents}`,
  el => `<slot></slot>` + el.getAttribute('items').split(',').map(t => `<button>${t}</button>`).join(''));

/* ---------- navigator ---------- */
define('tree-row', `:host{display:flex;height:23px;flex:none;align-items:center;padding-left:calc(var(--level,0)*25px)}
.ex{width:24px;margin-right:2px;height:20px;display:grid;place-items:center;flex:none}.ex ui-icon{width:15px;height:15px}
label{display:flex;align-items:center;white-space:nowrap}
input{appearance:none;width:17px;height:17px;border:1px solid #333;background:#fff;display:grid;place-items:center;flex:none;margin:0 5px 2px 0;outline:0}
input[type=radio]{border-radius:50%}
input[type=radio]:checked::before{content:"";width:9px;height:9px;border-radius:50%;background:#222}
input[type=checkbox]:checked::before{content:"";width:10px;height:5px;border:solid #222;border-width:0 0 1.500px 1.500px;transform:translateY(-1px) rotate(-45deg)}
input.part{background:#cce4f7;border-color:#2a6fa8}
label ui-icon{width:20px;height:20px;margin:0 6px 2px 0}
.t{padding-top:1px}`,
  el => { const a = n => el.getAttribute(n), st = a('state'); return `<button class="ex" aria-label="toggle"${a('ex') ? '' : ' disabled'}>${a('ex') ? `<ui-icon name="${a('ex') === 'o' ? 'exopen' : 'exclosed'}"></ui-icon>` : ''}</button><label><input type="${a('kind') === 'r' ? 'radio' : 'checkbox'}"${st === '1' ? ' checked' : ''}${st === 'p' ? ' class="part"' : ''}><ui-icon name="${a('icon')}"></ui-icon><span class="t"><slot></slot></span></label>`; });
const row = (lvl, ex, kind, st, ic, t) => `<tree-row style="--level:${lvl}" ex="${ex}" kind="${kind}" state="${st}" icon="${ic}"><span>${t}</span></tree-row>`;
const sub = (a, b) => `${a}<sub>${b}</sub>`;
const tree1 = [[0, 'o', 'c', 0, 'frame', 'Global Deformations'], ...['|u|', 'uX', 'uY', 'uZ', 'φX', 'φY', 'φZ'].map((t, i) => [1, '', 'r', i === 3 ? 1 : 0, 'frame', t]),
  [0, 'c', 'c', 0, 'mem', 'Members'], [0, 'c', 'c', 0, 'surf', 'Surfaces'], [0, 'o', 'c', 1, 'solid', 'Solids'], [1, 'o', 'c', 'p', 'solid', 'Stresses'], [2, 'o', 'c', 'p', 'solid', 'Basic Stresses'],
  ...[['σ', 'x'], ['σ', 'y'], ['σ', 'z'], ['τ', 'yz'], ['τ', 'xz'], ['τ', 'xy']].map((t, i) => [3, '', 'r', i === 2 ? 1 : 0, 'solid', sub(...t)]),
  [2, 'c', 'c', 'p', 'solid', 'Principal Stresses'], [2, 'c', 'c', 'p', 'solid', 'Equivalent Stresses'], [1, 'c', 'c', 'p', 'solid', 'Strains'],
  [0, 'c', 'c', 0, 'result', 'Criteria'], [0, 'c', 'c', 0, 'support', 'Support Reactions'], [0, 'c', 'c', 0, 'release', 'Releases'], [0, 'c', 'c', 0, 'frame', 'Distribution of Loads'], [0, 'c', 'c', 1, 'section', 'Result Sections'], [0, 'c', 'c', 0, 'xxflag', 'Values on Surfaces']];
const tree2 = [[0, 'c', 'c', 0, 'xres', 'Result Values'], [0, '', 'c', 0, 'eyeres', 'Title Information'], [0, '', 'c', 0, 'eyeres', 'Max/Min Information'], [0, 'c', 'c', 'p', 'eyeres', 'Deformation'], [0, 'c', 'c', 'p', 'eyeres', 'Lines']];
define('icon-tabs', `:host{display:flex;flex:none;height:31px;align-items:flex-start;background:#f7f7f7;border-top:1px solid #c9c5d5}
button{width:38px;height:27px;background:#ececec;border:1px solid #c9c5d5;border-top:0;border-left:0;display:grid;place-items:center}
button.on{background:#fff;height:30px;margin-top:-1px;width:39px}ui-icon{width:20px;height:20px}`,
  el => el.getAttribute('icons').split(' ').map((n, i) => `<button role="tab" aria-label="${n}"${i == el.getAttribute('on') ? ' class="on"' : ''}><ui-icon name="${n}"></ui-icon></button>`).join(''));
define('nav-panel', `:host{display:flex;flex-direction:column;flex:none;width:318px;min-height:0}
.body{flex:1;min-height:0;margin:1px 0 1px 1px;border:2px solid #c9c5d5;border-width:1px 2px 1px 1px;display:flex;flex-direction:column}
.pick{display:flex;padding:5px 1px 13px 3px}combo-box{flex:1}
.tree{display:flex;background:#fff;overflow:hidden;min-height:0}.tree.a{flex:1}.tree.b{flex:0 0 107px;margin-top:6px}
.rows{flex:1;min-width:0;display:flex;flex-direction:column;overflow:hidden}.tree.b .rows{padding-top:2px}sub{font-size:12px;line-height:0;vertical-align:-1px}`,
  () => `<dock-header>Navigator - Results</dock-header><div class="body"><div class="pick"><combo-box disabled value="Static Analysis"><ui-icon name="staticg" style="width:18px;height:18px"></ui-icon></combo-box><step-button off to="previous"></step-button><step-button off to="next"></step-button></div>
<div class="tree a"><div class="rows">${tree1.map(r => row(...r)).join('')}</div><scroll-bar parts="0 579 22"></scroll-bar></div>
<div class="tree b"><div class="rows">${tree2.map(r => row(...r)).join('')}</div><scroll-bar parts="0 22 44"></scroll-bar></div>
<icon-tabs icons="tabproj tabeye tabcam result" on="3"></icon-tabs></div>`);

/* ---------- 3D model (drawing units: one third of a pixel) ---------- */
const layers = ['#bb0000', '#ff0000', '#ffaa00', '#cfcf00', '#ffff00', '#00ff00', '#00e887', '#00f7f7', '#0099ff', '#0000ff', '#0000a5'];
const edges = [
  '68,343 1163,506 1795,222',
  '68,386 200,404 400,434 640,475 960,525 1115,549 1163,548 1185,546 1330,490 1490,410 1630,340 1795,272',
  '68,428 300,464 560,508 800,549 960,568 1163,604 1190,590 1330,525 1490,450 1620,385 1795,318',
  '68,480 140,499 330,512 700,562 960,597 1163,619 1220,606 1280,590 1410,530 1570,450 1710,385 1795,376',
  '68,520 200,540 300,565 560,610 700,635 960,668 1163,685 1220,684 1300,655 1340,630 1450,580 1590,512 1710,460 1795,437',
  '68,601 400,665 640,703 880,735 960,745 1050,750 1163,767 1195,752 1270,733 1410,667 1550,600 1690,540 1730,522 1795,507',
  '68,672 400,724 960,803 1163,835 1795,570',
  '68,727 400,784 960,858 1163,885 1330,820 1520,730 1570,703 1650,678 1750,635 1795,620',
  '68,784 400,840 960,917 1163,944 1330,878 1530,790 1690,715 1760,695 1795,675',
  '68,841 960,971 1163,999 1330,935 1530,845 1660,780 1750,755 1795,728',
  '68,897 960,1028 1163,1056 1330,985 1530,895 1730,810 1795,785',
  '68,953 960,1086 1163,1116 1795,833'];
const line = (pts, c = '#000', w = 3, o = .7, extra = '') => `<polyline points="${pts}" fill="none" stroke="${c}" stroke-width="${w}" opacity="${o}" ${extra}/>`;
const dash = pts => line(pts, '#b4bce0', 3, .7, 'stroke-dasharray="32 12"');
const pole = (x, a) => [['#8888ff', a[0], a[1]], ['#e81010', a[1], a[2]], ['#80b400', a[2], a[3]], ['#c07070', a[3], a[4]]].map(s => R(x, s[1], 10, s[2] - s[1], s[0])).join('');
const sq = (pts, c, r) => pts.split(' ').map(p => p.split(',')).map(([x, y]) => R(x - r, y - r, 2 * r, 2 * r, c)).join('');
const poly = (pts, f, o = 1, s = '#3c5858') => `<polygon points="${pts}" fill="${f}" fill-opacity="${o}" stroke="${s}" stroke-opacity=".6" stroke-width="2.500"/>`;
const model = `<g transform="translate(380 290) scale(.33333)">
${poly('68,343 700,58 1795,222 1163,506', '#7f394d', 1, '#000')}
${layers.map((c, i) => `<polygon points="${edges[i]} ${edges[i + 1].split(' ').reverse().join(' ')}" fill="${c}"/>`).join('')}
${edges.map((e, i) => line(e, '#000', i ? 3 : 4, i ? .7 : 1)).join('')}
${line('68,495 400,527 960,600 1163,622 1795,353')}${line('68,520 400,562 960,637 1163,659 1795,407')}${line('1163,611 1330,556 1450,500 1600,425 1795,340')}
${line('50,445 1163,611 1810,323', '#000', 5, 1)}${line('50,440 68,440')}${line('68,343 68,953', '#222', 3)}${line('1163,506 1163,1116', '#000', 4, 1)}${line('1795,222 1795,833', '#666', 4)}
${dash('155,337 725,80 1705,230 1145,483 155,337')}
${dash('80,440 80,361 1148,519 1148,590')}${dash('80,482 1148,628')}${dash('80,510 400,560 960,655 1148,680')}${dash('80,540 80,655 1148,815 1148,690')}${dash('82,540 300,568 700,622')}
${dash('92,702 1138,858 1138,1087 92,932 92,702')}${dash('1172,590 1172,515 1787,240 1787,310')}${dash('1200,612 1787,362')}${dash('1172,675 1787,425')}${dash('1172,695 1172,810 1787,555 1787,440')}${dash('1178,855 1783,598 1783,820 1178,1082 1178,855')}
${pole(36, [306, 460, 486, 640, 915])}${pole(1333, [530, 632, 668, 860, 1138])}
<g fill="none" stroke="#200" stroke-width="3"><ellipse cx="726" cy="296" rx="24" ry="8"/><ellipse cx="770" cy="277" rx="28" ry="10"/><ellipse cx="820" cy="248" rx="28" ry="10"/><ellipse cx="902" cy="218" rx="34" ry="10"/><path d="M805 310L850 316L885 330Q900 348 950 348Q990 348 1000 335L1195 262L1190 250L1175 248"/></g>
${poly('727,130 741,130 741,292 727,292', '#a8c4c4', .6)}${poly('766,112 779,112 779,275 766,275', '#a8c4c4', .6)}${poly('816,150 830,150 830,308 816,308', '#a8c4c4', .6)}${poly('843,152 857,152 857,316 843,316', '#a8c4c4', .6)}${poly('830,80 846,80 846,240 830,240', '#a8c4c4', .5)}
${poly('682,210 864,127 1175,173 1102,207 1035,236 990,256 850,236', '#8cb0b4', .5)}
${poly('682,127 866,44 1175,90 1102,124 1035,152 990,172 850,152', '#94bcbc', .75)}
<path d="M885 158Q890 176 930 180Q980 182 990 172L1035 152L1102 124L1175 90V255L1102 288L990 340Q970 350 930 346Q890 342 885 328Z" fill="#8caeb2" fill-opacity=".7" stroke="#3c5858" stroke-width="2"/>
${poly('850,152 885,158 885,328 850,316', '#86a6ac', .5)}
<path d="M892 165Q930 145 985 158M892 165Q895 180 940 182M892 250Q930 228 985 240M892 250Q900 262 940 264M955 182V345M985 172V340M1035 152V315M1102 124V288M1025 140V300M1148 102V268M900 165V335M920 170V340M990 256L1175 173M990 172L1035 152M866 44V130M905 54V215M930 100L1040 60M1000 62V150M1093 80V115M864 127L1020 150L1175 173M950 270L1175 248M1020 225L1102 207" fill="none" stroke="#486868" stroke-width="2.500" opacity=".5"/>
<path d="M955 142L1090 88M965 150L1098 96" fill="none" stroke="#222" stroke-width="9" stroke-dasharray="2 6" opacity=".45"/>
<path d="M1035 152L1102 124M1035 236L1102 207M1122 132L1162 115V155L1122 172ZM1122 216L1162 199V238L1122 255ZM682,127L850 152M682 210L850 236M1102 288L1175 255" fill="none" stroke="#101818" stroke-width="3.500"/>
${poly('866,44 1175,90 1150,102 850,56', '#c0dcd8', .35, 'none')}${poly('900,180 960,180 960,345 900,340', '#b4cccc', .25, 'none')}
${sq('682,127 682,210 734,128 773,113 838,80 838,84 850,152 850,236 866,44 905,54 931,96 864,127 897,156 905,137 823,142 838,166 773,196 734,214 708,306 716,296 740,296 750,280 768,284 790,280 846,252 838,245 825,228 808,310 850,316 864,210 902,218 1175,90 1102,124 1122,132 1162,115 1122,172 1162,153 1175,173 1102,207 1122,216 1162,199 1122,255 1162,236 1175,255 1102,288 1035,152 1020,111 995,66 1093,78 990,172 990,256 955,140 997,150 1093,160 1022,193 1035,236 955,222 991,338 1035,316 865,288 897,322 927,238 955,305', '#e82020', 4)}
${line('933,385 1010,396', '#d00000', 6, 1)}${P('M1034 401L1006 388L1008 405Z', '#f00000')}${line('933,385 890,404', '#00c000', 9, 1)}${P('M873 412L880 396L896 406Z', '#00ff00')}${line('933,385 933,475', '#0000a0', 7, 1)}${P('M933 500L926 472H941Z', '#0000b0')}
${sq('700,58 68,343 50,445 68,495 68,520 68,671 68,953 1163,506 1166,613 1163,619 1163,659 1163,835 1163,1116 1795,222 1812,323 1795,353 1795,407 1797,569 1795,833', '#f0f', 6)}
</g>`;
define('model-view', `:host{display:block;background:#fff;overflow:hidden;min-height:0}svg{display:block}`, () => `<svg width="1076" height="565" viewBox="324 167 1076 565" role="img" aria-label="Soil solid with basic stresses">${model}</svg>`);

/* ---------- control panel ---------- */
const stops = ['-8.8', '-34.2', '-59.6', '-85.0', '-110.5', '-135.9', '-161.3', '-186.7', '-212.2', '-237.6', '-263.0', '-288.5'];
const shares = ['11.35', '1.64', '16.11', '26.06', '3.68', '10.05', '13.66', '1.95', '1.81', '1.87', '11.83'];
define('control-panel', `:host{display:flex;flex-direction:column;width:299px;background:#fff;box-shadow:0 1px 9px rgba(0,0,0,.45)}
header{display:flex;align-items:center;height:39px;padding:2px 1px 0 9px;border-bottom:1px solid #c9c5d5;color:#8c8c8c;font-size:14px}
header button{margin-left:auto;width:25px;height:25px;background:#e2e2e2;display:grid;place-items:center;opacity:1;color:#fff}
.info{height:48px;padding:5px 11px;line-height:18px}sub,sup{font-size:12px;line-height:0}sub{vertical-align:-1px}sup{font-size:11px;vertical-align:2px}
.scale{display:flex;background:#f7f7f7;height:406px;margin:0 1px}
.lab{width:82px;text-align:right;display:flex;flex-direction:column;padding-top:5px}.lab span,.pct span{height:33px;line-height:33px;flex:none}
.sw{width:51px;margin:22px 0 0 16px}.sw i{display:block;height:31px;margin-bottom:2px;border:1px solid rgba(255,255,255,.5);border-width:1px 0}
.pct{width:60px;text-align:right;padding-top:22px;display:flex;flex-direction:column}
.slide{display:grid;width:21px;height:377px;margin:13px auto 0 9px;justify-items:center;background:linear-gradient(90deg,transparent 8px,#d0d6d6 8px 9px,#e6eaea 9px 12px,#d0d6d6 12px 13px,transparent 13px)}
input{grid-area:1/1;appearance:none;writing-mode:vertical-lr;width:21px;height:377px;background:none;pointer-events:none}
input::-webkit-slider-thumb{appearance:none;width:21px;height:12px;background:#0078d7;border:0;pointer-events:auto}
input::-webkit-slider-runnable-track{background:none;width:21px}
.act{display:flex;justify-content:flex-end;gap:6px;padding:6px 7px 6px;height:37px}.act button{width:29px;height:24px;background:#cce4f7;display:grid;place-items:center}.act button+button{border:1px solid #0a5a9c;height:24px}.act ui-icon{width:20px;height:20px}
icon-tabs{height:29px}`,
  () => `<header>Control Panel<button aria-label="close">×</button></header><div class="info">Solids | Stresses | Basic Stresses<br>σ<sub>z</sub> [kN/m<sup>2</sup>]</div>
<div class="scale"><div class="lab">${stops.map(s => `<span>${s}</span>`).join('')}</div><div class="sw">${layers.map(c => `<i style="background-color:${c}"></i>`).join('')}</div><div class="pct">${shares.map(s => `<span>${s} %</span>`).join('')}</div><div class="slide"><input type="range" aria-label="upper limit" value="0"><input type="range" aria-label="lower limit" value="100"></div><scroll-bar parts="0 362 0"></scroll-bar></div>
<div class="act"><button aria-label="edit scale"><ui-icon name="handbox"></ui-icon></button><button aria-label="ranges"><ui-icon name="ranges"></ui-icon></button></div><icon-tabs icons="cplist scales legend pick" on="0"></icon-tabs>`);

/* ---------- result table ---------- */
const B = '#d9e4ff', K = '#ffbcbc';
const bar = (v, axis, start, w, c) => `<td class="n" style="--a:${axis}px;--s:${start}px;--w:${w}px;--c:${c}">${v}</td>`;
define('result-table', `:host{display:grid;grid-template-columns:1fr 19px;grid-template-rows:153px 20px;border:1px solid #c9c5d5;border-top-width:2px;border-right:0;background:#fff;flex:none;margin-right:1px}
.clip{overflow:hidden;min-width:0}table{width:100%;table-layout:fixed;border-collapse:separate;border-spacing:0}
td,th{height:20px;padding:0;font-weight:400;line-height:17px;border-right:1px solid #d6d6d6;border-bottom:1px solid #dadada;white-space:nowrap;overflow:hidden;text-align:center}
td{line-height:18px;padding-top:1px;vertical-align:top}
.top td{height:12px;background:#e0e0e0;border-color:#f7f7f7;padding:0;line-height:1px}
th{background:#efefef;border-color:#cfcfcf;vertical-align:bottom}thead .g{border-bottom:0;vertical-align:middle}
.f,tbody th{background:#e0e0e0!important}tbody td{background-color:#f1edfc}
tbody th{vertical-align:middle}
td.r{text-align:right;padding-right:4px}td.l{text-align:left;padding-left:4px}
td.n{text-align:right;padding-right:21px;background-image:linear-gradient(#b4b4b4,#b4b4b4),linear-gradient(var(--c),var(--c));background-position:var(--a) 2px,var(--s) 2px;background-size:1px 15px,var(--w) 15px;background-repeat:no-repeat}
tbody tr.gap td{background:#fff;border-right-color:#fff}tbody tr.t td{background-color:#ebebeb}tr.t th{border-bottom-color:#e0e0e0}
td.m div{display:flex;justify-content:flex-end;align-items:center;gap:7px;margin-right:-14px}td.m i{width:7px;height:14px}
sub,sup{font-size:12px;line-height:0}sub{vertical-align:-1px}sup{font-size:11px;vertical-align:2px}
.corner{background:#f0f0f0}`,
  () => `<div class="clip"><table><colgroup>${[74, 75, 75, 51, 56, 50, 33, 107, 71, 73, 73, 105, 85].map(w => `<col style="width:${w}px">`).join('')}<col></colgroup>
<thead><tr class="top">${'<td></td>'.repeat(14)}</tr>
<tr><th rowspan="2" class="f">Solid<br>No.</th><th rowspan="2">Surface<br>No.</th><th rowspan="2">Grid<br>Point No.</th><th colspan="3" class="g" style="text-align:left;padding-left:5px">Grid Point Coordinates [m]</th><th rowspan="2"></th><th colspan="6" class="g">Basic Stresses [kN/m<sup>2</sup>]</th><th rowspan="2">Solid Comment</th></tr>
<tr><th>X</th><th>Y</th><th>Z</th>${[['σ', 'x'], ['σ', 'y'], ['σ', 'z'], ['τ', 'yz'], ['τ', 'xz'], ['τ', 'xy']].map(t => `<th>${sub(...t)}</th>`).join('')}</tr></thead>
<tbody>
<tr><th>5</th><td>46</td><td>12542</td><td class="r">13.996</td><td class="r">-1.993</td><td class="r">4.813</td><td class="l">${sub('τ', 'xy')}</td>${bar('-39.3', 85, 59, 26, B)}${bar('-40.8', 49, 33, 16, B)}${bar('-75.8', 52, 39, 13, B)}${bar('1.8', 26, 27, 4, K)}${bar('-1.6', 39, 35, 5, B)}${bar('<div>3.8<i style="background:linear-gradient(#808080 6px,#ddd 6px 8px,#4848ff 8px)"></i></div>', 36, 37, 26, K).replace('"n"', '"n m"')}<td></td></tr>
<tr><th>5</th><td></td><td>12582</td><td class="r">13.996</td><td class="r">18.003</td><td class="r">4.926</td><td></td>${bar('-39.8', 85, 59, 26, B)}${bar('-40.4', 49, 33, 16, B)}${bar('-77.3', 52, 39, 13, B)}${bar('-1.8', 26, 23, 3, B)}${bar('-2.1', 39, 33, 6, B)}${bar('<div>-4.5<i style="background:linear-gradient(#b00000 6px,#ddd 6px 8px,#808080 8px)"></i></div>', 36, 6, 30, B).replace('"n"', '"n m"')}<td></td></tr>
<tr class="gap"><td colspan="14"></td></tr>
<tr class="t"><th>Total</th>${'<td></td>'.repeat(6)}${bar('-2.1', 85, 84, 1, B)}${bar('-2.0', 49, 48, 1, B)}${bar('-8.8', 52, 50, 2, B)}${bar('6.8', 26, 27, 12, K)}${bar('9.2', 39, 40, 26, K)}${bar('3.8', 36, 37, 26, K)}<td></td></tr>
<tr class="t"><th>max/min</th>${'<td></td>'.repeat(6)}${bar('-123.4', 85, 6, 79, B)}${bar('-123.4', 49, 5, 44, B)}${bar('-288.5', 52, 5, 47, B)}${bar('-8.6', 26, 11, 15, B)}${bar('-7.5', 39, 18, 21, B)}${bar('-4.5', 36, 6, 30, B)}<td></td></tr>
</tbody></table></div><scroll-bar parts="88 22 2"></scroll-bar><scroll-bar horizontal parts="0 932 79"></scroll-bar><div class="corner"></div>`);
define('sheet-tabs', `:host{display:flex;flex:none;height:26px;align-items:flex-start;overflow:hidden}
nav{display:flex;align-items:center;width:152px;flex:none;height:26px;justify-content:space-between;padding:0 2px 0 3px;color:#333}nav button{width:17px;height:17px;flex:none}nav ui-icon{width:16px;height:16px}nav span{padding:0 6px 0 4px}
.tabs{display:flex;flex:1;min-width:0;overflow:hidden}.tabs button{flex:none;height:24px;padding:0 5px;background:#ececec;border:1px solid #c9c5d5;border-left-width:0;border-top:0;white-space:nowrap}
.tabs button:first-child{border-left-width:1px}.tabs button.on{background:#fff;height:26px;padding-top:2px}
.end{display:flex;gap:2px;height:24px;align-items:center;padding-right:1px}.end ui-icon{width:18px;height:20px}`,
  () => `<nav><button aria-label="first"><ui-icon name="first"></ui-icon></button><button aria-label="previous"><ui-icon name="tl"></ui-icon></button><span>2 of 10</span><button aria-label="next"><ui-icon name="tr"></ui-icon></button><button aria-label="last"><ui-icon name="last"></ui-icon></button></nav><div class="tabs" role="tablist">${['Deformations', 'Basic Stresses', 'Principal Stresses', 'Equivalent Stresses', 'Basic Total Strains', 'Principal Total Strains', 'Equivalent Total Strains', 'Basic'].map((t, i) => `<button role="tab"${i === 1 ? ' class="on"' : ''}>${t}</button>`).join('')}</div><div class="end"><button aria-label="scroll left" style="color:#999"><ui-icon name="tl"></ui-icon></button><button aria-label="scroll right" style="color:#000"><ui-icon name="tr"></ui-icon></button></div>`);
define('result-panel', `:host{display:flex;flex-direction:column;flex:none;min-width:0}menu-strip{padding:2px 0 0 8px;height:24px}tool-row{height:34px;border:0;padding:0}`,
  () => `<dock-header>Solids | Basic Stresses</dock-header><menu-strip items="Go To,Edit,Selection,View,Settings"></menu-strip>
<tool-row><tool-group plain first><combo-box value="Static Analysis" style="width:158px"><ui-icon name="static" style="width:18px;height:18px"></ui-icon></combo-box><step-button to="previous"></step-button><step-button off to="next"></step-button>${tools('|')}</tool-group>
<tool-group plain><combo-box value="Results by Solid" style="width:201px"><ui-icon name="bluecube" style="width:18px;height:18px"></ui-icon></combo-box><step-button to="previous"></step-button><step-button off to="next"></step-button>${tools('|')}<combo-box value="LC1 + L..." style="width:202px"><case-tag></case-tag></combo-box><step-button to="previous"></step-button><step-button to="next"></step-button>${tools('| *arr1 *arr2 | *eyeres xres | tgrid *tyel tgry | *bars | excel')}</tool-group><tool-group plain grow>${tools('filter +')}</tool-group></tool-row>
<result-table></result-table><sheet-tabs></sheet-tabs>`);

define('status-bar', `:host{display:flex;flex:none;height:27px;padding:1px 4px 0 404px;border-top:1px solid #f0f0f0;line-height:26px}
button{padding:0 4px;border:1px solid transparent;white-space:nowrap}button.on{background:#ededed;border-color:#c8c8c8 #f7f7f7 #f7f7f7 #c8c8c8}
span{border-left:1px solid #cfcfcf;padding-left:4px;height:24px;white-space:nowrap;flex:none}svg{align-self:flex-end;margin:0 0 3px auto;width:12px;height:12px}`,
  () => `<button class="on">SNAP</button><button>GRID</button><button>LGRID</button><button class="on">OSNAP</button><span style="width:101px"></span><span style="width:131px"></span><span style="flex:1 1 194px">CS: Global XYZ</span><span style="width:81px">Plane: XY</span><span style="width:94px"></span><span style="width:94px"></span><span style="width:94px"></span><span></span><svg viewBox="0 0 12 12">${[[9, 1], [5, 5], [9, 5], [1, 9], [5, 9], [9, 9]].map(([x, y]) => R(x, y, 3, 3, '#bcbcbc')).join('')}</svg>`);

define('app-window', `:host{display:flex;flex-direction:column;height:100vh;background:#f7f7f7;border:1px solid #6e6e6e;box-sizing:border-box}
.title{display:flex;align-items:center;height:37px;flex:none;background:#fff;padding-left:8px;font-size:14px;color:#000}.title ui-icon{width:20px;height:20px;margin-right:6px}h1{font-size:14px;font-weight:400;margin:0 auto 0 0}
.title button{width:59px;height:36px;display:grid;place-items:center}.title button ui-icon{width:18px;height:18px;margin:0}
.menu{display:flex;flex:none}.menu menu-strip{flex:1}.menu menu-strip ui-icon{width:20px;height:15px;margin-right:-7px}
.ends{display:flex;border-bottom:1px solid #e2e2e2;width:68px}.ends i{width:22px;height:20px;border-left:1px solid #d0d0d0}
.case{width:338px}
main{display:flex;flex:1;min-height:0;gap:5px}.right{flex:1;min-width:0;display:flex;flex-direction:column;gap:5px;position:relative}model-view{flex:1}
control-panel{position:absolute;top:6px;right:13px}.last{border-bottom:0;height:34px}`,
  () => `<div class="title"><ui-icon name="app"></ui-icon><h1>Dlubal RFEM | 6.02.0012 | Webinar_GA-1_all-updated_NO-results.rf6</h1><button aria-label="minimize"><ui-icon name="wmin"></ui-icon></button><button aria-label="maximize"><ui-icon name="wmax"></ui-icon></button><button aria-label="close"><ui-icon name="wclose"></ui-icon></button></div>
<div class="menu"><menu-strip items="File,Edit,View,Insert,Assign,Calculate,Results,Tools,Options,Window,CAD-BIM,Help"><ui-icon name="bridge"></ui-icon></menu-strip><div class="ends"><i></i><i></i><i></i></div></div>
<tool-row><tool-group first>${tools('new open dcloud blocks handlist save print> newdoc doc | undo~ redo~ | *panel1 *table1 *panel2 console sc panel3')}</tool-group><tool-group>${tools('selquad selell selcirc selpoly +')}</tool-group><tool-group>${tools('findx cube cubepen | ax1 ax2 ax3 ax4> micro~ | stair> slab> dimx> beam3d~')}</tool-group></tool-row>
<tool-row><tool-group first>${tools('snode> sline smember> spoly> | ssup slinesup ssurfsup | sdim> sxx | ssurf> ssurf2> sopen> ssolid> sblock | sload1 sload2 sload3 sload4 simp> sload5>')}</tool-group><tool-group grow>${tools('filter | frame film | mem surf *solid support *section | r1 r2 r3 r4 r5 snewsec | +')}</tool-group><tool-group>${tools('gridtri> +')}</tool-group></tool-row>
<tool-row class="last"><tool-group first>${tools('tbl1 tbl2')}<combo-box class="case" value="LC1 + LC2 + 0.30 * LC3 + LC5"><case-tag></case-tag></combo-box><step-button to="previous"></step-button><step-button to="next"></step-button>${tools('filterx> *eyeimp ximp eyeload xload eyegrid> *eyeres xres | resgear abacus>')}</tool-group><tool-group>
<combo-box value="1 - Global XYZ" style="width:209px"><i style="width:14px;height:14px;background:#ccffff"></i></combo-box>${tools('csys | handgrid snapgrid *pl1 pl2 pl3 | g1 g2 g3 g4 g5')}</tool-group></tool-row>
<main><nav-panel></nav-panel><div class="right"><model-view></model-view><control-panel></control-panel><result-panel></result-panel></div></main><status-bar></status-bar>`);
</script>
</body>
</html>
